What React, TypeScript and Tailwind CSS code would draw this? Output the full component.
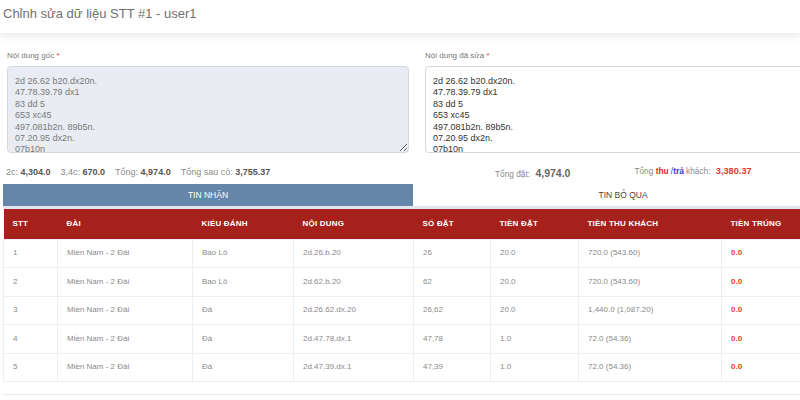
import React from "react";

const original = `2d 26.62 b20.dx20n.
47.78.39.79 dx1
83 dd 5
653 xc45
497.081b2n. 89b5n.
07.20.95 dx2n.
07b10n
12.34 dd10n.
56 xc5n.`;

const rows = [
  { stt: "1", dai: "Miền Nam - 2 Đài", kieu: "Bao Lô", nd: "2d.26.b.20", so: "26", tien: "20.0", thu: "720.0 (543.60)", trung: "0.0" },
  { stt: "2", dai: "Miền Nam - 2 Đài", kieu: "Bao Lô", nd: "2d.62.b.20", so: "62", tien: "20.0", thu: "720.0 (543.60)", trung: "0.0" },
  { stt: "3", dai: "Miền Nam - 2 Đài", kieu: "Đá", nd: "2d.26.62.dx.20", so: "26,62", tien: "20.0", thu: "1,440.0 (1,087.20)", trung: "0.0" },
  { stt: "4", dai: "Miền Nam - 2 Đài", kieu: "Đá", nd: "2d.47.78.dx.1", so: "47,78", tien: "1.0", thu: "72.0 (54.36)", trung: "0.0" },
  { stt: "5", dai: "Miền Nam - 2 Đài", kieu: "Đá", nd: "2d.47.39.dx.1", so: "47,39", tien: "1.0", thu: "72.0 (54.36)", trung: "0.0" },
];

const headers = ["STT", "ĐÀI", "KIỂU ĐÁNH", "NỘI DUNG", "SỐ ĐẶT", "TIỀN ĐẶT", "TIỀN THU KHÁCH", "TIỀN TRÚNG"];
const widths = [54, 135, 101, 120, 77, 88, 143, 112];

export default function App() {
  return (
    <div className="w-[800px] h-[400px] overflow-hidden bg-white font-['Liberation_Sans',Arial,sans-serif]">
      {/* header */}
      <div className="h-[33px] px-[3px] pt-[5px] shadow-[0_3px_8px_rgba(0,0,0,0.09)] relative">
        <h1 className="text-[13px] leading-[17px] text-[#707070]">Chỉnh sửa dữ liệu STT #1 - user1</h1>
      </div>

      {/* form */}
      <div className="w-[850px] px-[7px] pt-[16px] flex gap-[16px]">
        <div className="w-[402px] shrink-0">
          <label className="block text-[8px] leading-[13px] text-[#777] mb-[4px]">
            Nội dung gốc <span className="text-[#e53935]">*</span>
          </label>
          <textarea
            readOnly
            value={original}
            className="block w-full h-[87px] bg-[#e9ecf3] border border-[#d3d7df] rounded-[4px] px-[7px] pt-[9px] text-[9px] leading-[11.4px] text-[#7a7a7a] overflow-hidden resize-y outline-none"
          />
        </div>
        <div className="w-[420px] shrink-0">
          <label className="block text-[8px] leading-[13px] text-[#777] mb-[4px]">
            Nội dung đã sửa <span className="text-[#e53935]">*</span>
          </label>
          <textarea
            readOnly
            value={original}
            className="block w-full h-[87px] bg-white border border-[#d3d7df] rounded-[4px] px-[7px] pt-[9px] text-[9px] leading-[11.4px] text-[#333] overflow-hidden resize-none outline-none"
          />
        </div>
      </div>

      {/* totals */}
      <div className="flex items-center h-[31px] px-[6px] pt-[8px]">
        <div className="w-[419px] shrink-0 flex gap-[10px] text-[9px] text-[#8a8a8a]">
          <span>2c: <b className="text-[#555]">4,304.0</b></span>
          <span>3,4c: <b className="text-[#555]">670.0</b></span>
          <span>Tổng: <b className="text-[#555]">4,974.0</b></span>
          <span>Tổng sau cò: <b className="text-[#555]">3,755.37</b></span>
        </div>
        <div className="flex items-center pl-[70px] text-[8.3px] text-[#8a8a8a]">
          <span className="pt-[3px]">
            Tổng đặt: <b className="ml-[3px] text-[10.5px] text-[#666]">4,974.0</b>
          </span>
          <span className="ml-[64px] pb-[2px]">
            Tổng <b className="text-[#e02424]">thu</b> <span className="text-[#1e3fd0]">/</span>
            <b className="text-[#1e3fd0]">trả</b> khách: <b className="ml-[3px] text-[9.2px] text-[#e53935]">3,380.37</b>
          </span>
        </div>
      </div>

      {/* tabs + table */}
      <div className="w-[830px] ml-[3px]">
        <div className="flex h-[22px] text-[8.5px]">
          <div className="w-[410px] bg-[#6585a9] text-white flex items-center justify-center">TIN NHẬN</div>
          <div className="flex-1 bg-white text-[#444] flex items-center justify-center">TIN BỎ QUA</div>
        </div>
        <div className="h-[3px] bg-[#e1e6ee]" />
        <table className="table-fixed border-collapse w-[830px]">
          <colgroup>
            {widths.map((w, i) => (
              <col key={i} style={{ width: w }} />
            ))}
          </colgroup>
          <thead>
            <tr className="bg-[#a6211b] h-[30px]">
              {headers.map((h) => (
                <th key={h} className="text-left pl-[9px] text-[8px] font-bold text-white tracking-[0.2px]">
                  {h}
                </th>
              ))}
            </tr>
          </thead>
          <tbody>
            {rows.map((r) => (
              <tr key={r.stt} className="h-[28.5px] text-[8px] text-[#8a8a8a]">
                {[r.stt, r.dai, r.kieu, r.nd, r.so, r.tien, r.thu].map((c, i) => (
                  <td key={i} className="pl-[9px] border border-[#eceef2]">
                    {c}
                  </td>
                ))}
                <td className="pl-[9px] border border-[#eceef2] font-bold text-[#e53935]">{r.trung}</td>
              </tr>
            ))}
          </tbody>
        </table>
        <div className="mt-[12px] border-t border-[#e8eaee]" />
      </div>
    </div>
  );
}
